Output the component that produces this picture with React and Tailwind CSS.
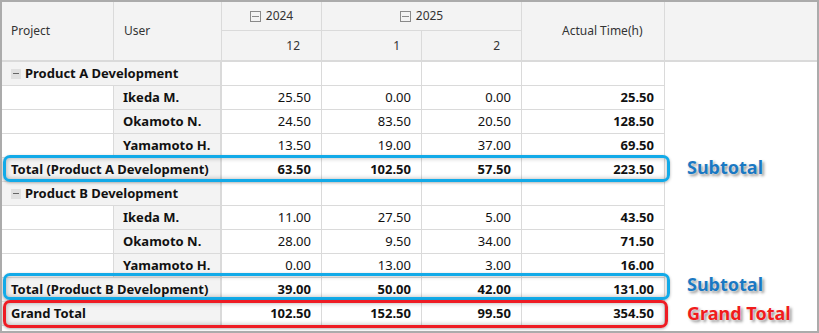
import React from 'react';

const line = 'border-[#dadada]';

const rows = [
  { type: 'group', label: 'Product A Development' },
  { type: 'data', user: 'Ikeda M.', values: ['25.50', '0.00', '0.00'], total: '25.50' },
  { type: 'data', user: 'Okamoto N.', values: ['24.50', '83.50', '20.50'], total: '128.50' },
  { type: 'data', user: 'Yamamoto H.', values: ['13.50', '19.00', '37.00'], total: '69.50' },
  { type: 'total', label: 'Total (Product A Development)', values: ['63.50', '102.50', '57.50'], total: '223.50' },
  { type: 'group', label: 'Product B Development' },
  { type: 'data', user: 'Ikeda M.', values: ['11.00', '27.50', '5.00'], total: '43.50' },
  { type: 'data', user: 'Okamoto N.', values: ['28.00', '9.50', '34.00'], total: '71.50' },
  { type: 'data', user: 'Yamamoto H.', values: ['0.00', '13.00', '3.00'], total: '16.00' },
  { type: 'total', label: 'Total (Product B Development)', values: ['39.00', '50.00', '42.00'], total: '131.00' },
  { type: 'total', label: 'Grand Total', values: ['102.50', '152.50', '99.50'], total: '354.50' },
];

const HeaderToggle = () => (
  <span className="w-[11px] h-[11px] border border-[#8a8a8a] flex items-center justify-center mr-[5px]">
    <span className="w-[7px] h-px bg-[#8a8a8a]" />
  </span>
);

const RowToggle = () => (
  <span className="w-[10px] h-[10px] bg-[#e0e0e0] flex items-center justify-center mr-[4px]">
    <span className="w-[6px] h-px bg-[#666]" />
  </span>
);

const Num = ({ children, bold }) => (
  <div className={`h-6 border-r border-b ${line} flex items-center justify-end pr-[10px] ${bold ? 'font-bold' : ''}`}>
    {children}
  </div>
);

const Row = ({ row }) => {
  if (row.type === 'group') {
    return (
      <>
        <div className={`col-span-2 h-6 bg-[#f3f3f3] border-r-2 border-b ${line} flex items-center pl-[9px] font-bold`}>
          <RowToggle />
          {row.label}
        </div>
        <Num />
        <Num />
        <Num />
        <Num />
        <div />
      </>
    );
  }
  if (row.type === 'data') {
    return (
      <>
        <div className={`h-6 border-r border-b ${line}`} />
        <div className={`h-6 bg-[#f3f3f3] border-r-2 border-b ${line} flex items-center pl-[9px] font-bold`}>
          {row.user}
        </div>
        {row.values.map((v, i) => (
          <Num key={i}>{v}</Num>
        ))}
        <Num bold>{row.total}</Num>
        <div />
      </>
    );
  }
  return (
    <>
      <div className={`col-span-2 h-6 bg-[#f3f3f3] border-r-2 border-b ${line} flex items-center pl-[9px] font-bold`}>
        {row.label}
      </div>
      {row.values.map((v, i) => (
        <Num key={i} bold>{v}</Num>
      ))}
      <Num bold>{row.total}</Num>
      <div />
    </>
  );
};

export default function App() {
  return (
    <div className="relative w-[819px] h-[333px] border-2 border-[#ababab] bg-white font-['Noto_Sans',sans-serif] text-[13px] text-[#111] overflow-hidden">
      <div className="grid grid-cols-[112px_108px_100px_100px_100px_143px_152px] grid-rows-[29px_31px]">
        {/* header */}
        <div className={`row-span-2 bg-[#f3f3f3] border-r border-b-2 ${line} flex items-center pl-[9px] text-[12px] text-[#333]`}>
          Project
        </div>
        <div className={`row-span-2 bg-[#f3f3f3] border-r border-b-2 ${line} flex items-center pl-[10px] text-[12px] text-[#333]`}>
          User
        </div>
        <div className={`bg-[#f3f3f3] border-r border-b ${line} flex items-center justify-center text-[12px] text-[#333]`}>
          <HeaderToggle />
          2024
        </div>
        <div className={`col-span-2 bg-[#f3f3f3] border-r border-b ${line} flex items-center justify-center text-[12px] text-[#333]`}>
          <HeaderToggle />
          2025
        </div>
        <div className={`row-span-2 bg-[#f3f3f3] border-r border-b-2 ${line} flex items-center pl-[40px] text-[12px] text-[#333]`}>
          Actual Time(h)
        </div>
        <div className={`row-span-2 bg-[#f3f3f3] border-b-2 ${line}`} />
        <div className={`bg-[#f3f3f3] border-r border-b-2 ${line} flex items-center justify-end pr-[21px] text-[12px] text-[#333]`}>
          12
        </div>
        <div className={`bg-[#f3f3f3] border-r border-b-2 ${line} flex items-center justify-end pr-[21px] text-[12px] text-[#333]`}>
          1
        </div>
        <div className={`bg-[#f3f3f3] border-r border-b-2 ${line} flex items-center justify-end pr-[21px] text-[12px] text-[#333]`}>
          2
        </div>
      </div>
      <div className="grid grid-cols-[112px_108px_100px_100px_100px_143px_152px]">
        {rows.map((r, i) => (
          <Row key={i} row={r} />
        ))}
      </div>

      {/* callouts */}
      <div className="absolute left-[1px] top-[153px] w-[667px] h-[27px] border-[3px] border-[#12aae8] rounded-[7px] shadow-[inset_0_0_5px_rgba(0,0,0,0.3),0_1px_3px_rgba(0,0,0,0.3)]" />
      <div className="absolute left-[1px] top-[271px] w-[667px] h-[27px] border-[3px] border-[#12aae8] rounded-[7px] shadow-[inset_0_0_5px_rgba(0,0,0,0.3),0_1px_3px_rgba(0,0,0,0.3)]" />
      <div className="absolute left-[1px] top-[298px] w-[665px] h-[28px] border-[3px] border-[#ee1c24] rounded-[7px] shadow-[inset_0_0_5px_rgba(0,0,0,0.3),0_1px_3px_rgba(0,0,0,0.3)]" />
      <div className="absolute left-[685px] top-[153px] leading-[24px] text-[18px] font-bold text-[#1a78c2] [text-shadow:0_0_2px_#fff,2px_2px_3px_rgba(0,0,0,0.45)]">
        Subtotal
      </div>
      <div className="absolute left-[685px] top-[270px] leading-[24px] text-[18px] font-bold text-[#1a78c2] [text-shadow:0_0_2px_#fff,2px_2px_3px_rgba(0,0,0,0.45)]">
        Subtotal
      </div>
      <div className="absolute left-[685px] top-[299px] leading-[24px] text-[18px] font-bold text-[#f01c1c] [text-shadow:0_0_2px_#fff,2px_2px_3px_rgba(0,0,0,0.45)]">
        Grand Total
      </div>
    </div>
  );
}
